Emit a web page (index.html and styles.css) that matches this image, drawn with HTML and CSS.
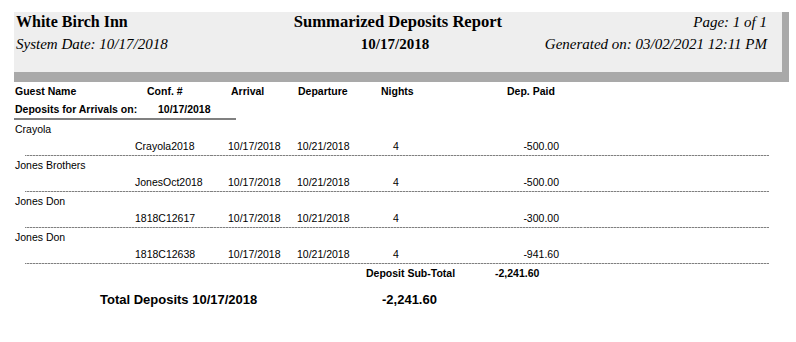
FILE: index.html
```html
<!DOCTYPE html>
<html>
<head>
<meta charset="utf-8">
<link rel="stylesheet" href="styles.css">
</head>
<body>
<div class="report">
  <div class="banner">
    <div class="b-left b-strong">White Birch Inn</div>
    <div class="b-center b-title">Summarized Deposits Report</div>
    <div class="b-right b-em">Page: 1 of 1</div>
    <div class="b-left b-em b-row2">System Date: 10/17/2018</div>
    <div class="b-center b-date b-row2">10/17/2018</div>
    <div class="b-right b-em b-row2">Generated on: 03/02/2021 12:11 PM</div>
  </div>

  <div class="cols head-row">
    <div class="h-guest">Guest Name</div>
    <div class="h-conf">Conf. #</div>
    <div class="h-arr">Arrival</div>
    <div class="h-dep">Departure</div>
    <div class="h-nights">Nights</div>
    <div class="h-paid">Dep. Paid</div>
  </div>

  <div class="arrivals">
    <span>Deposits for Arrivals on:</span>
    <span>10/17/2018</span>
  </div>

  <div class="group">
    <div class="guest">Crayola</div>
    <div class="cols detail">
      <div></div><div>Crayola2018</div><div>10/17/2018</div><div>10/21/2018</div><div class="n">4</div><div class="amt">-500.00</div>
    </div>
  </div>
  <div class="group">
    <div class="guest">Jones Brothers</div>
    <div class="cols detail">
      <div></div><div>JonesOct2018</div><div>10/17/2018</div><div>10/21/2018</div><div class="n">4</div><div class="amt">-500.00</div>
    </div>
  </div>
  <div class="group">
    <div class="guest">Jones Don</div>
    <div class="cols detail">
      <div></div><div>1818C12617</div><div>10/17/2018</div><div>10/21/2018</div><div class="n">4</div><div class="amt">-300.00</div>
    </div>
  </div>
  <div class="group">
    <div class="guest">Jones Don</div>
    <div class="cols detail">
      <div></div><div>1818C12638</div><div>10/17/2018</div><div>10/21/2018</div><div class="n">4</div><div class="amt">-941.60</div>
    </div>
  </div>

  <div class="subtotal">
    <div></div>
    <div>Deposit Sub-Total</div>
    <div>-2,241.60</div>
  </div>

  <div class="total">
    <div></div>
    <div>Total Deposits 10/17/2018</div>
    <div>-2,241.60</div>
  </div>
</div>
</body>
</html>
```

FILE: styles.css
```css
* { box-sizing: border-box; }
html, body { background: #fff; }
body {
  margin: 12px 0 0 14px;
  font-family: "Liberation Sans", Arial, sans-serif;
  font-size: 10.5px;
  color: #000;
}
.report { width: 775px; }

.banner {
  width: 775px;
  height: 70px;
  background: #eeeeee;
  border-right: 7px solid #a9a9a9;
  border-bottom: 10px solid #a9a9a9;
  display: grid;
  grid-template-columns: 1fr auto 1fr;
  grid-template-rows: 20px 24px;
  padding: 0 2px 0 2px;
  font-family: "Liberation Serif", "Times New Roman", serif;
  color: #000;
}
.b-left, .b-center, .b-right { line-height: 20px; white-space: nowrap; }
.b-row2 { line-height: 24px; }
.b-left { text-align: left; }
.b-center { text-align: center; }
.b-right { text-align: right; padding-right: 13px; }
.b-strong { font-weight: bold; font-size: 16px; }
.b-title { font-weight: bold; font-size: 16.6px; }
.b-date { font-weight: bold; font-size: 15px; padding-right: 6px; }
.b-em { font-style: italic; font-size: 15px; }

.cols {
  display: grid;
  grid-template-columns: 121px 93px 69px 84px 30px 149px;
  white-space: nowrap;
}
.head-row {
  font-weight: bold;
  line-height: 19px;
}
.h-guest { padding-left: 1px; }
.h-conf { padding-left: 12px; }
.h-arr { padding-left: 3px; }
.h-dep { padding-left: 1px; }
.h-nights { padding-left: 0; }
.h-paid { padding-left: 96px; }

.arrivals {
  width: 222px;
  display: flex;
  font-weight: bold;
  line-height: 17px;
  padding-left: 1px;
  border-bottom: 2px solid #808080;
}
.arrivals span:first-child { width: 143px; }

.group { height: 36px; }
.guest {
  line-height: 18px;
  padding-left: 1px;
}
.detail {
  line-height: 17px;
  height: 18px;
  border-bottom: 1px solid transparent;
  border-image: repeating-linear-gradient(to right, #808080 0 2px, #c8c8c8 2px 3px) 1;
  margin-left: 11px;
  width: 744px;
  grid-template-columns: 110px 93px 69px 84px 30px 149px;
}
.detail .n { text-align: center; }
.detail .amt { text-align: right; padding-right: 1px; }

.subtotal {
  display: grid;
  grid-template-columns: 352px 129px auto;
  font-weight: bold;
  line-height: 18px;
}

.total {
  display: grid;
  grid-template-columns: 86px 282px auto;
  font-weight: bold;
  font-size: 13px;
  line-height: 20px;
  padding-top: 8px;
}
```
